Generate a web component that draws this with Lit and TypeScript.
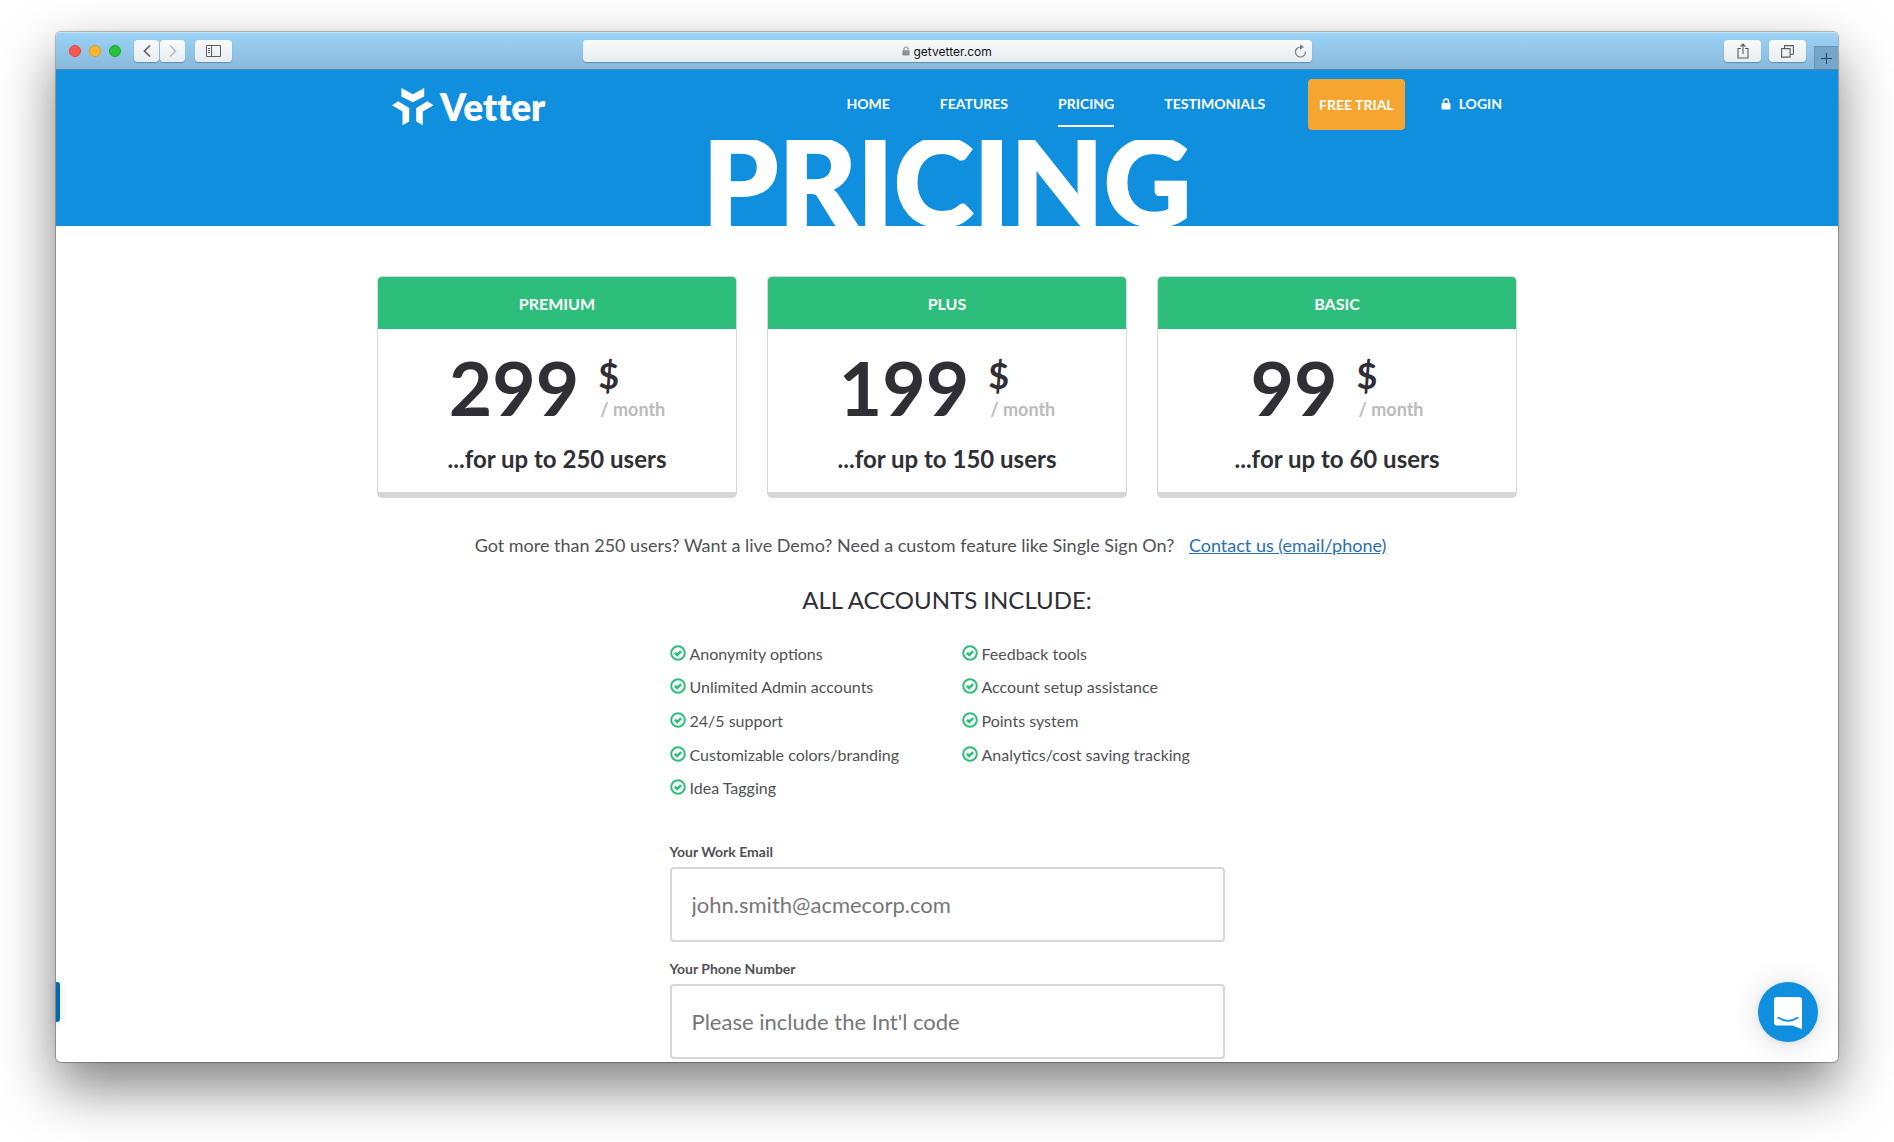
import { LitElement, html, css, svg } from "lit";
import { customElement, property } from "lit/decorators.js";

interface Plan {
  name: string;
  price: number;
  users: number;
}

const PLANS: Plan[] = [
  { name: "PREMIUM", price: 299, users: 250 },
  { name: "PLUS", price: 199, users: 150 },
  { name: "BASIC", price: 99, users: 60 },
];

const LINKS = ["HOME", "FEATURES", "PRICING", "TESTIMONIALS"];

const FEATURES: string[][] = [
  ["Anonymity options", "Unlimited Admin accounts", "24/5 support", "Customizable colors/branding", "Idea Tagging"],
  ["Feedback tools", "Account setup assistance", "Points system", "Analytics/cost saving tracking"],
];

const lockShape = svg`
  <path d="M2.5 5V3.5a2.5 2.5 0 0 1 5 0V5" fill="none" stroke="currentColor" stroke-width="1.5"/>
  <rect x="0.5" y="5" width="9" height="6.5" rx="0.8" fill="currentColor"/>`;

/** Safari-style toolbar on top of the window. */
@customElement("browser-bar")
export class BrowserBar extends LitElement {
  static styles = css`
    :host {
      display: block;
    }
    .bar {
      box-sizing: border-box;
      height: 38px;
      display: grid;
      grid-template-columns: 1fr minmax(200px, 729px) 1fr;
      align-items: center;
      border-top: 1px solid #c3e3f8;
      border-bottom: 1px solid #5587a9;
      background: linear-gradient(#9ad2f6, #8ab9da);
      border-radius: 5px 5px 0 0;
    }
    .left,
    .right {
      display: flex;
      align-items: center;
    }
    .left {
      padding-left: 13px;
    }
    .right {
      justify-content: flex-end;
      gap: 8px;
      height: 100%;
    }
    .lights {
      display: flex;
      gap: 8px;
      margin-right: 13px;
    }
    .light {
      box-sizing: border-box;
      width: 12px;
      height: 12px;
      border-radius: 50%;
    }
    .red {
      background: #fc5650;
      border: 1px solid #dd4541;
    }
    .yellow {
      background: #fdb62c;
      border: 1px solid #d99a2a;
    }
    .green {
      background: #27c437;
      border: 1px solid #1da42c;
    }
    button {
      padding: 0;
      border: 0;
      font: inherit;
    }
    .tool {
      display: flex;
      align-items: center;
      justify-content: center;
      width: 37px;
      height: 22px;
      border-radius: 4px;
      background: linear-gradient(#f8fafc, #e8edf1);
      box-shadow: 0 1px 1px rgba(30, 70, 100, 0.4);
      color: #5c5c5c;
    }
    .step {
      width: 25px;
      margin-right: 1px;
    }
    .dim {
      color: #b9bcbf;
    }
    .sidebar {
      margin-left: 9px;
    }
    .address {
      display: flex;
      align-items: center;
      height: 22px;
      border-radius: 4px;
      background: linear-gradient(#f8fafc, #e8edf1);
      box-shadow: 0 1px 1px rgba(30, 70, 100, 0.4);
    }
    .site {
      flex: 1;
      display: flex;
      align-items: center;
      justify-content: center;
      gap: 4px;
      padding-left: 19px;
      color: #8d8f91;
    }
    .url {
      width: 80px;
      padding: 1px 0 0;
      border: 0;
      background: none;
      color: #111;
      font: 12px/20px Inter, sans-serif;
    }
    .reload {
      display: flex;
      padding: 0 5px 0 0;
      background: none;
      color: #7a7c7e;
    }
    .add {
      align-self: flex-end;
      display: flex;
      align-items: center;
      justify-content: center;
      width: 24px;
      height: 23px;
      border-left: 1px solid #5f93b8;
      border-top: 1px solid #5f93b8;
      background: #76a7c9;
      color: #1d4764;
    }
  `;

  render() {
    return html`
      <div class="bar">
        <div class="left">
          <div class="lights">
            <span class="light red"></span><span class="light yellow"></span><span class="light green"></span>
          </div>
          <button class="tool step" aria-label="Back">
            <svg width="8" height="14" viewBox="0 0 8 14" fill="none" stroke="currentColor" stroke-width="1.6"><path d="M7 1.5L1.5 7L7 12.5" /></svg>
          </button>
          <button class="tool step dim" aria-label="Forward">
            <svg width="8" height="14" viewBox="0 0 8 14" fill="none" stroke="currentColor" stroke-width="1.6"><path d="M1 1.5L6.5 7L1 12.5" /></svg>
          </button>
          <button class="tool sidebar" aria-label="Sidebar">
            <svg width="15" height="12" viewBox="0 0 15 12" fill="none" stroke="currentColor"><path d="M.5.5h14v11H.5zM5.5.5v11M2 3.5h2M2 5.5h2M2 7.5h2" /></svg>
          </button>
        </div>
        <div class="address">
          <div class="site">
            <svg width="8" height="10" viewBox="0 0 10 12">${lockShape}</svg>
            <input class="url" type="text" value="getvetter.com" aria-label="Address" />
          </div>
          <button class="reload" aria-label="Reload">
            <svg width="13" height="14" viewBox="0 0 13 14">
              <path d="M6.5 3A5 5 0 1 0 11.4 7.6" fill="none" stroke="currentColor" stroke-width="1.2" />
              <path d="M6 .3L10 3L6 5.7z" fill="currentColor" />
            </svg>
          </button>
        </div>
        <div class="right">
          <button class="tool" aria-label="Share">
            <svg width="12" height="16" viewBox="0 0 12 16" fill="none" stroke="currentColor" stroke-width="1.1"><path d="M4 5.5H1v9.5h10V5.5H8M6 11V1M3.4 3.6L6 1l2.6 2.6" /></svg>
          </button>
          <button class="tool" aria-label="Tabs">
            <svg width="13" height="13" viewBox="0 0 13 13" fill="none" stroke="currentColor" stroke-width="1.1"><path d="M.6 3.6h8.5v8.5H.6zM3.6 3.4V.6h8.8v8.6H9.3" /></svg>
          </button>
          <button class="add" aria-label="New tab">
            <svg width="11" height="11" viewBox="0 0 11 11" stroke="currentColor"><path d="M5.5 0v11M0 5.5h11" /></svg>
          </button>
        </div>
      </div>
    `;
  }
}

@customElement("plan-card")
export class PlanCard extends LitElement {
  @property({ attribute: false }) plan!: Plan;

  static styles = css`
    :host {
      display: block;
    }
    .card {
      border: 1px solid #d7d7d7;
      border-bottom-width: 6px;
      border-radius: 5px;
      background: #fff;
      color: #2f2f36;
      text-align: center;
      overflow: hidden;
    }
    .name {
      margin: 0;
      padding-top: 2px;
      background: #2dbe7b;
      color: #fff;
      font-size: 16px;
      font-weight: 700;
      line-height: 50px;
    }
    .price {
      display: flex;
      justify-content: center;
      gap: 19px;
      margin-top: 18px;
      font-weight: 700;
      text-align: left;
    }
    .amount {
      font-size: 75px;
      line-height: 80px;
    }
    .unit {
      display: flex;
      flex-direction: column;
    }
    .currency {
      font-size: 36px;
      line-height: 56px;
    }
    .period {
      padding-left: 2px;
      color: #bbb;
      font-size: 18px;
      line-height: 12px;
    }
    .users {
      margin: 0;
      padding: 16px 0 17px;
      font-size: 24px;
      font-weight: 700;
      line-height: 32px;
    }
  `;

  render() {
    const { name, price, users } = this.plan;
    return html`
      <article class="card">
        <h2 class="name">${name}</h2>
        <div class="price">
          <span class="amount">${price}</span>
          <span class="unit"><span class="currency">$</span><span class="period">/ month</span></span>
        </div>
        <p class="users">...for up to ${users} users</p>
      </article>
    `;
  }
}

@customElement("app-root")
export class AppRoot extends LitElement {
  static styles = css`
    :host {
      display: block;
      box-sizing: border-box;
      height: 100vh;
      padding: 32px 56px 80px;
      overflow: hidden;
      background: #fff;
      font-family: Lato, "Liberation Sans", sans-serif;
      color: #515156;
    }
    .window {
      position: relative;
      display: flex;
      flex-direction: column;
      height: 100%;
      border-radius: 5px;
      background: #fff;
      box-shadow: 0 0 1px 1px rgba(0, 0, 0, 0.28), 0 25px 55px rgba(0, 0, 0, 0.5);
    }
    .page {
      flex: 1;
      min-height: 0;
      overflow: hidden;
      border-radius: 0 0 5px 5px;
    }
    .hero {
      background: #118fdf;
      color: #fff;
    }
    .wrap {
      max-width: 1140px;
      margin: 0 auto;
    }
    .top {
      box-sizing: border-box;
      display: flex;
      align-items: flex-start;
      justify-content: space-between;
      height: 70px;
      padding: 0 15px;
    }
    a {
      color: inherit;
      text-decoration: none;
    }
    .brand {
      display: flex;
      align-items: center;
      gap: 6px;
      margin-top: 18px;
      font-size: 37px;
      font-weight: 800;
      font-variant-ligatures: none;
      line-height: 38px;
    }
    .menu {
      display: flex;
      align-items: flex-start;
      gap: 36px;
      padding-top: 9px;
      font-size: 14px;
      font-weight: 700;
      line-height: 20px;
    }
    .links {
      display: flex;
      gap: 50px;
      margin: 0;
      padding: 0 7px 0 0;
      list-style: none;
    }
    .link {
      display: block;
      padding: 15px 0 11px;
      border-bottom: 2px solid transparent;
    }
    .current {
      border-color: #fff;
    }
    .trial {
      padding: 0 11px;
      border-radius: 4px;
      background: #f6a531;
      line-height: 51px;
    }
    .login {
      display: flex;
      align-items: center;
      gap: 8px;
      padding-top: 15px;
    }
    .title {
      height: 86px;
      margin: 0;
      overflow: hidden;
      font-size: 121px;
      font-weight: 900;
      line-height: 80px;
      text-align: center;
      -webkit-text-stroke: 2px #fff;
    }
    .plans {
      display: grid;
      grid-template-columns: repeat(3, 1fr);
      gap: 30px;
      padding-top: 50px;
    }
    .contact {
      margin: 35px 0 0;
      padding-right: 33px;
      font-size: 18px;
      line-height: 24px;
      text-align: center;
    }
    .contact a {
      margin-left: 10px;
      color: #2a6fb3;
      text-decoration: underline;
    }
    .heading {
      margin: 27px 0 0;
      color: #2f2f36;
      font-size: 24px;
      font-weight: 400;
      line-height: 32px;
      text-align: center;
    }
    .narrow {
      max-width: 555px;
      margin: 0 auto;
    }
    .features {
      display: grid;
      grid-template-columns: 292px 1fr;
      padding-top: 21px;
      font-size: 16px;
      line-height: 24px;
    }
    .list {
      display: grid;
      grid-template-rows: repeat(5, 1fr);
      height: 168px;
      margin: 0;
      padding: 0;
      list-style: none;
    }
    .item {
      display: flex;
      align-items: center;
      gap: 4px;
    }
    .tick {
      margin-bottom: 2px;
      color: #2dbe7b;
    }
    .form {
      display: flex;
      flex-direction: column;
      padding-top: 37px;
    }
    .label {
      font-size: 14px;
      font-weight: 700;
      line-height: 20px;
    }
    .field {
      box-sizing: border-box;
      width: 100%;
      height: 75px;
      margin: 5px 0 17px;
      padding: 0 20px;
      border: 2px solid #d7d7d7;
      border-radius: 4px;
      background: #fff;
      color: #515156;
      font: 22px/30px Lato, "Liberation Sans", sans-serif;
    }
    .field::placeholder {
      color: #76767a;
      opacity: 1;
    }
    .tab {
      position: absolute;
      left: 0;
      bottom: 40px;
      width: 4px;
      height: 40px;
      padding: 0;
      border: 0;
      border-radius: 0 3px 3px 0;
      background: #0069b3;
      box-shadow: 0 2px 8px rgba(0, 0, 0, 0.2);
    }
    .chat {
      position: absolute;
      right: 20px;
      bottom: 20px;
      width: 60px;
      height: 60px;
      padding: 0;
      border: 0;
      border-radius: 50%;
      background: #118fdf;
      box-shadow: 0 1px 6px rgba(0, 0, 0, 0.08), 0 2px 32px rgba(0, 0, 0, 0.14);
    }
    .chat svg {
      display: block;
    }
  `;

  render() {
    return html`
      <div class="window">
        <browser-bar></browser-bar>
        <div class="page">
          <header class="hero">
            <div class="wrap top">
              <a class="brand" href="#">
                <svg width="42" height="38" viewBox="0 0 42 38" fill="#fff" aria-hidden="true">
                  <path d="M9.4 0L20.8 6.2L32.2 0V8.4L20.8 14.3L9.4 8.4z" />
                  <path d="M0 17.3L6.2 13.3L17.2 20V33.4L10.5 37.2V23.4z" />
                  <path d="M41.6 17.3L35.4 13.3L24.2 20V33.4L30.8 37.2V23.4z" />
                </svg>
                <span>Vetter</span>
              </a>
              <nav class="menu">
                <ul class="links">
                  ${LINKS.map(
                    (name) => html`<li><a class="link ${name === "PRICING" ? "current" : ""}" href="#">${name}</a></li>`
                  )}
                </ul>
                <a class="trial" href="#">FREE TRIAL</a>
                <a class="login" href="#">
                  <svg width="10" height="12" viewBox="0 0 10 12" aria-hidden="true">${lockShape}</svg>
                  LOGIN
                </a>
              </nav>
            </div>
            <h1 class="title">PRICING</h1>
          </header>
          <main>
            <section class="wrap plans">
              ${PLANS.map((plan) => html`<plan-card .plan=${plan}></plan-card>`)}
            </section>
            <p class="contact">
              Got more than 250 users? Want a live Demo? Need a custom feature like Single Sign On?
              <a href="#">Contact us (email/phone)</a>
            </p>
            <h2 class="heading">ALL ACCOUNTS INCLUDE:</h2>
            <div class="narrow">
              <div class="features">
                ${FEATURES.map(
                  (column) => html`
                    <ul class="list">
                      ${column.map(
                        (text) => html`
                          <li class="item">
                            <svg class="tick" width="16" height="16" viewBox="0 0 16 16" fill="none" stroke="currentColor" stroke-width="2" aria-hidden="true">
                              <circle cx="8" cy="8" r="6.8" />
                              <path d="M4.9 7.8L7.2 10L11.1 6.1" stroke-width="2.6" />
                            </svg>
                            ${text}
                          </li>
                        `
                      )}
                    </ul>
                  `
                )}
              </div>
              <form class="form">
                <label class="label" for="email">Your Work Email</label>
                <input class="field" id="email" type="email" placeholder="john.smith@acmecorp.com" />
                <label class="label" for="phone">Your Phone Number</label>
                <input class="field" id="phone" type="tel" placeholder="Please include the Int'l code" />
              </form>
            </div>
          </main>
        </div>
        <button class="tab" aria-label="Open panel"></button>
        <button class="chat" aria-label="Open chat">
          <svg width="60" height="60" viewBox="0 0 60 60" aria-hidden="true">
            <path d="M19 15H41a3 3 0 0 1 3 3V47.2L34.5 43.4H19a3 3 0 0 1-3-3V18a3 3 0 0 1 3-3z" fill="#fff" />
            <path d="M20.4 35.8Q30 42 39.6 35.8" fill="none" stroke="#118fdf" stroke-width="1.8" stroke-linecap="round" />
          </svg>
        </button>
      </div>
    `;
  }
}
